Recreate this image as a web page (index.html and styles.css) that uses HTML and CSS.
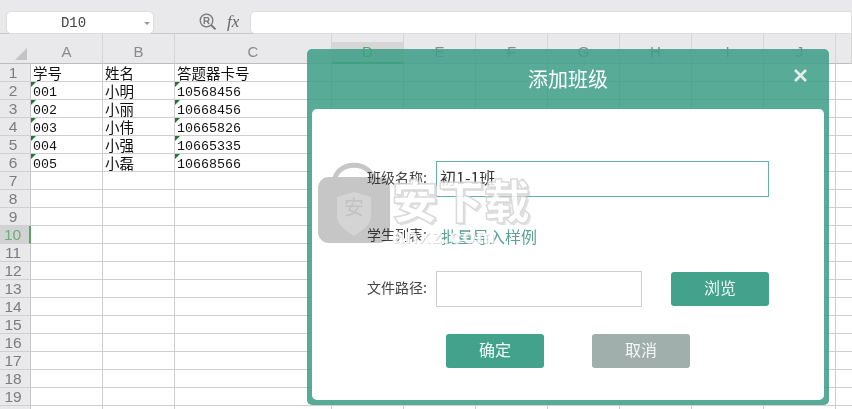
FILE: index.html
```html
<!DOCTYPE html>
<html lang="zh">
<head>
<meta charset="utf-8">
<title>添加班级</title>
<link rel="stylesheet" href="styles.css">
</head>
<body>
<div class="toolbar">
  <div class="namebox"><span class="nametext">D10</span><span class="caret"></span></div>
  <svg class="zoomicon" width="18" height="18" viewBox="0 0 18 18" fill="none" stroke="#777" stroke-width="1.3"><circle cx="7.5" cy="7.5" r="6.3"/><path d="M12 12l4.6 4.4" stroke-width="2"/><path d="M5.3 11V4.6h2.8a1.7 1.7 0 0 1 0 3.6H5.3M8 8.2l2.2 2.8"/></svg>
  <span class="fx">fx</span>
  <div class="formula"></div>
</div>
<div class="sheet">
  <div class="row head">
    <div class="rh corner"><span class="tri"></span></div>
    <div class="c a">A</div><div class="c b">B</div><div class="c w">C</div>
    <div class="c d sel">D</div><div class="c d">E</div><div class="c d">F</div><div class="c d">G</div><div class="c d">H</div><div class="c d">I</div><div class="c d">J</div><div class="c rest"></div>
  </div>
  <div class="row"><div class="rh">1</div><div class="c a">学号</div><div class="c b">姓名</div><div class="c w">答题器卡号</div><div class="c d"></div><div class="c d"></div><div class="c d"></div><div class="c d"></div><div class="c d"></div><div class="c d"></div><div class="c d"></div><div class="c rest"></div></div>
  <div class="row"><div class="rh">2</div><div class="c a num flag">001</div><div class="c b">小明</div><div class="c w num flag">10568456</div><div class="c d"></div><div class="c d"></div><div class="c d"></div><div class="c d"></div><div class="c d"></div><div class="c d"></div><div class="c d"></div><div class="c rest"></div></div>
  <div class="row"><div class="rh">3</div><div class="c a num flag">002</div><div class="c b">小丽</div><div class="c w num flag">10668456</div><div class="c d"></div><div class="c d"></div><div class="c d"></div><div class="c d"></div><div class="c d"></div><div class="c d"></div><div class="c d"></div><div class="c rest"></div></div>
  <div class="row"><div class="rh">4</div><div class="c a num flag">003</div><div class="c b">小伟</div><div class="c w num flag">10665826</div><div class="c d"></div><div class="c d"></div><div class="c d"></div><div class="c d"></div><div class="c d"></div><div class="c d"></div><div class="c d"></div><div class="c rest"></div></div>
  <div class="row"><div class="rh">5</div><div class="c a num flag">004</div><div class="c b">小强</div><div class="c w num flag">10665335</div><div class="c d"></div><div class="c d"></div><div class="c d"></div><div class="c d"></div><div class="c d"></div><div class="c d"></div><div class="c d"></div><div class="c rest"></div></div>
  <div class="row"><div class="rh">6</div><div class="c a num flag">005</div><div class="c b">小磊</div><div class="c w num flag">10668566</div><div class="c d"></div><div class="c d"></div><div class="c d"></div><div class="c d"></div><div class="c d"></div><div class="c d"></div><div class="c d"></div><div class="c rest"></div></div>
  <div class="row"><div class="rh">7</div><div class="c a"></div><div class="c b"></div><div class="c w"></div><div class="c d"></div><div class="c d"></div><div class="c d"></div><div class="c d"></div><div class="c d"></div><div class="c d"></div><div class="c d"></div><div class="c rest"></div></div>
  <div class="row"><div class="rh">8</div><div class="c a"></div><div class="c b"></div><div class="c w"></div><div class="c d"></div><div class="c d"></div><div class="c d"></div><div class="c d"></div><div class="c d"></div><div class="c d"></div><div class="c d"></div><div class="c rest"></div></div>
  <div class="row"><div class="rh">9</div><div class="c a"></div><div class="c b"></div><div class="c w"></div><div class="c d"></div><div class="c d"></div><div class="c d"></div><div class="c d"></div><div class="c d"></div><div class="c d"></div><div class="c d"></div><div class="c rest"></div></div>
  <div class="row"><div class="rh cur">10</div><div class="c a"></div><div class="c b"></div><div class="c w"></div><div class="c d"></div><div class="c d"></div><div class="c d"></div><div class="c d"></div><div class="c d"></div><div class="c d"></div><div class="c d"></div><div class="c rest"></div></div>
  <div class="row"><div class="rh">11</div><div class="c a"></div><div class="c b"></div><div class="c w"></div><div class="c d"></div><div class="c d"></div><div class="c d"></div><div class="c d"></div><div class="c d"></div><div class="c d"></div><div class="c d"></div><div class="c rest"></div></div>
  <div class="row"><div class="rh">12</div><div class="c a"></div><div class="c b"></div><div class="c w"></div><div class="c d"></div><div class="c d"></div><div class="c d"></div><div class="c d"></div><div class="c d"></div><div class="c d"></div><div class="c d"></div><div class="c rest"></div></div>
  <div class="row"><div class="rh">13</div><div class="c a"></div><div class="c b"></div><div class="c w"></div><div class="c d"></div><div class="c d"></div><div class="c d"></div><div class="c d"></div><div class="c d"></div><div class="c d"></div><div class="c d"></div><div class="c rest"></div></div>
  <div class="row"><div class="rh">14</div><div class="c a"></div><div class="c b"></div><div class="c w"></div><div class="c d"></div><div class="c d"></div><div class="c d"></div><div class="c d"></div><div class="c d"></div><div class="c d"></div><div class="c d"></div><div class="c rest"></div></div>
  <div class="row"><div class="rh">15</div><div class="c a"></div><div class="c b"></div><div class="c w"></div><div class="c d"></div><div class="c d"></div><div class="c d"></div><div class="c d"></div><div class="c d"></div><div class="c d"></div><div class="c d"></div><div class="c rest"></div></div>
  <div class="row"><div class="rh">16</div><div class="c a"></div><div class="c b"></div><div class="c w"></div><div class="c d"></div><div class="c d"></div><div class="c d"></div><div class="c d"></div><div class="c d"></div><div class="c d"></div><div class="c d"></div><div class="c rest"></div></div>
  <div class="row"><div class="rh">17</div><div class="c a"></div><div class="c b"></div><div class="c w"></div><div class="c d"></div><div class="c d"></div><div class="c d"></div><div class="c d"></div><div class="c d"></div><div class="c d"></div><div class="c d"></div><div class="c rest"></div></div>
  <div class="row"><div class="rh">18</div><div class="c a"></div><div class="c b"></div><div class="c w"></div><div class="c d"></div><div class="c d"></div><div class="c d"></div><div class="c d"></div><div class="c d"></div><div class="c d"></div><div class="c d"></div><div class="c rest"></div></div>
  <div class="row"><div class="rh">19</div><div class="c a"></div><div class="c b"></div><div class="c w"></div><div class="c d"></div><div class="c d"></div><div class="c d"></div><div class="c d"></div><div class="c d"></div><div class="c d"></div><div class="c d"></div><div class="c rest"></div></div>
  <div class="row"><div class="rh"></div><div class="c a"></div><div class="c b"></div><div class="c w"></div><div class="c d"></div><div class="c d"></div><div class="c d"></div><div class="c d"></div><div class="c d"></div><div class="c d"></div><div class="c d"></div><div class="c rest"></div></div>
</div>

<div class="dialog">
  <div class="dtitle"><span>添加班级</span>
    <svg class="close" width="13" height="13" viewBox="0 0 13 13" stroke="#e6eeeb" stroke-width="2.6"><path d="M1 1l11 11M12 1L1 12"/></svg>
  </div>
  <div class="dbody">
    <div class="frow first"><label class="lbl">班级名称:</label><div class="field active">初1-1班</div></div>
    <div class="frow second"><label class="lbl">学生列表:</label><span class="link">批量导入样例</span></div>
    <div class="frow third"><label class="lbl">文件路径:</label><div class="field short"></div><button class="btn browse">浏览</button></div>
    <div class="actions"><button class="btn">确定</button><button class="btn cancel">取消</button></div>
  </div>
</div>

<div class="lock">
  <svg class="lockart" width="74" height="82" viewBox="0 0 74 82"><path d="M17 22C17 -3 57 -3 57 22" fill="none" stroke="#c6c6c6" stroke-width="5"/><rect x="1" y="15" width="72" height="66" rx="11" fill="#c6c6c6"/><path d="M20 35l17-5 17 5v19c0 9-9 15-17 20-8-5-17-11-17-20z" fill="#d4d4d4"/></svg>
  <span class="lockchar">安</span>
</div>
<div class="brand"><div class="cn">安下载</div><div class="en">anxz.com</div></div>
</body>
</html>
```

FILE: styles.css
```css
* { box-sizing: border-box; }
html, body { margin: 0; padding: 0; }
body {
  width: 852px;
  height: 409px;
  overflow: hidden;
  background: #fff;
  font-family: "Noto Sans CJK SC", "Noto Sans", sans-serif;
}
.toolbar {
  height: 34px;
  background: #e9e8ea;
  border-bottom: 1px solid #c9c9c9;
  display: flex;
  align-items: flex-start;
  padding: 11px 0 0 6px;
}
.namebox {
  width: 148px;
  height: 23px;
  background: #fff;
  border: 1px solid #dcdcdc;
  border-radius: 5px;
  display: flex;
  align-items: center;
  justify-content: center;
  padding-right: 13px;
  position: relative;
}
.nametext { font: 14px "Liberation Mono", monospace; color: #444; }
.caret {
  position: absolute;
  right: 3px;
  top: 10px;
  border: 3px solid transparent;
  border-top-color: #999;
}
.zoomicon { margin: 2px 0 0 45px; }
.fx {
  margin: 1px 0 0 10px;
  width: 23px;
  font: italic 17px "Liberation Serif", serif;
  color: #666;
}
.formula {
  flex: 1;
  height: 23px;
  background: #fff;
  border: 1px solid #dcdcdc;
  border-radius: 5px 0 0 5px;
}
.sheet { display: flex; flex-direction: column; }
.row { display: flex; height: 18px; flex: none; }
.head { height: 30px; background: #e9e8ea; }
.rh {
  width: 31px;
  flex: none;
  background: #e9e8ea;
  border-right: 1px solid #c6c6c6;
  border-bottom: 1px solid #d0d0d0;
  color: #7c7c7c;
  font: 15.5px/17px "Liberation Sans", sans-serif;
  text-align: center;
  padding-right: 4px;
}
.corner { border-right: 0; border-bottom: 1px solid #bdbdbd; position: relative; }
.tri {
  position: absolute;
  left: 15px;
  top: 14px;
  border-style: solid;
  border-width: 0 0 12px 12px;
  border-color: transparent transparent #c4c4c4 transparent;
}
.cur {
  background: #d2d2d2;
  color: #6cae78;
  border-right: 2px solid #5aa368;
}
.c {
  flex: none;
  position: relative;
  border-right: 1px solid #cfcfcf;
  border-bottom: 1px solid #cfcfcf;
  padding-left: 2px;
  color: #111;
  font-size: 14.5px;
  line-height: 17px;
  white-space: nowrap;
}
.a, .b { width: 72px; }
.w { width: 157px; }
.d { width: 72px; }
.rest { flex: 1; border-right: 0; }
.head .c {
  border-bottom: 1px solid #bdbdbd;
  border-right: 1px solid #d4d4d4;
  color: #8a8a8a;
  font: 15px/20px "Liberation Sans", sans-serif;
  text-align: center;
  padding: 8px 0 0;
}
.head .sel {
  background: linear-gradient(#e9e8ea 8px, #d6d6d6 8px);
  border-bottom: 2px solid #5aa368;
  color: #5aa368;
}
.num {
  font: 13.33px/19px "Liberation Mono", monospace;
  padding-top: 1px;
}
.flag::before {
  content: "";
  position: absolute;
  left: 0;
  top: 0;
  border-style: solid;
  border-width: 5px 5px 0 0;
  border-color: #1e7a2e transparent transparent transparent;
}
.dialog {
  position: absolute;
  left: 307px;
  top: 49px;
  width: 522px;
  height: 356px;
  background: rgba(62, 158, 136, 0.87);
  border-radius: 5px;
  padding: 0 5px 5px;
  display: flex;
  flex-direction: column;
}
.dtitle {
  height: 60px;
  flex: none;
  display: flex;
  align-items: center;
  justify-content: center;
  color: #fff;
  font-size: 20px;
  position: relative;
  padding-bottom: 1px;
}
.close { position: absolute; right: 17px; top: 20px; }
.dbody {
  flex: 1;
  background: #fff;
  border-radius: 5px;
  padding-top: 52px;
}
.frow { display: flex; align-items: center; }
.lbl {
  width: 115px;
  margin-right: 9px;
  text-align: right;
  font-size: 14px;
  line-height: 20px;
  color: #444;
  position: relative;
  top: -2px;
}
.field {
  width: 333px;
  height: 36px;
  border: 1px solid #cfcfcf;
  padding-left: 3px;
  font-size: 16px;
  line-height: 30px;
  color: #333;
}
.active { border-color: #66b3a4; }
.short { width: 206px; }
.second { margin-top: 27px; height: 24px; }
.third { margin-top: 23px; }
.link { margin-left: 5px; font-size: 16px; line-height: 22px; color: #5aa294; }
.btn {
  width: 98px;
  height: 34px;
  background: #42a28c;
  color: #f2faf7;
  border: 0;
  border-radius: 3px;
  font: 16px/30px "Noto Sans CJK SC", sans-serif;
  padding: 0 0 4px;
}
.browse { margin-left: 29px; }
.actions { display: flex; gap: 48px; margin: 27px 0 0 134px; }
.cancel { background: #a0aeac; }
.lock {
  position: absolute;
  left: 317px;
  top: 162px;
  width: 74px;
  height: 82px;
  mix-blend-mode: multiply;
  pointer-events: none;
}
.lockart { display: block; }
.lockchar {
  position: absolute;
  left: 27px;
  top: 33px;
  font-size: 20px;
  line-height: 24px;
  color: #c2c2c2;
}
.brand {
  position: absolute;
  left: 392px;
  top: 170px;
  opacity: 0.85;
  pointer-events: none;
}
.cn {
  font-size: 46px;
  line-height: 56px;
  font-weight: 900;
  color: #fff;
  -webkit-text-stroke: 1.5px #d4d4d4;
  text-shadow: 2px 2px 0 #dcdcdc;
  white-space: nowrap;
}
.en {
  font: 700 21px/20px "Liberation Sans", sans-serif;
  color: #fff;
  letter-spacing: 1px;
  text-shadow: 1px 1px 0 #d6d6d6;
}
```
